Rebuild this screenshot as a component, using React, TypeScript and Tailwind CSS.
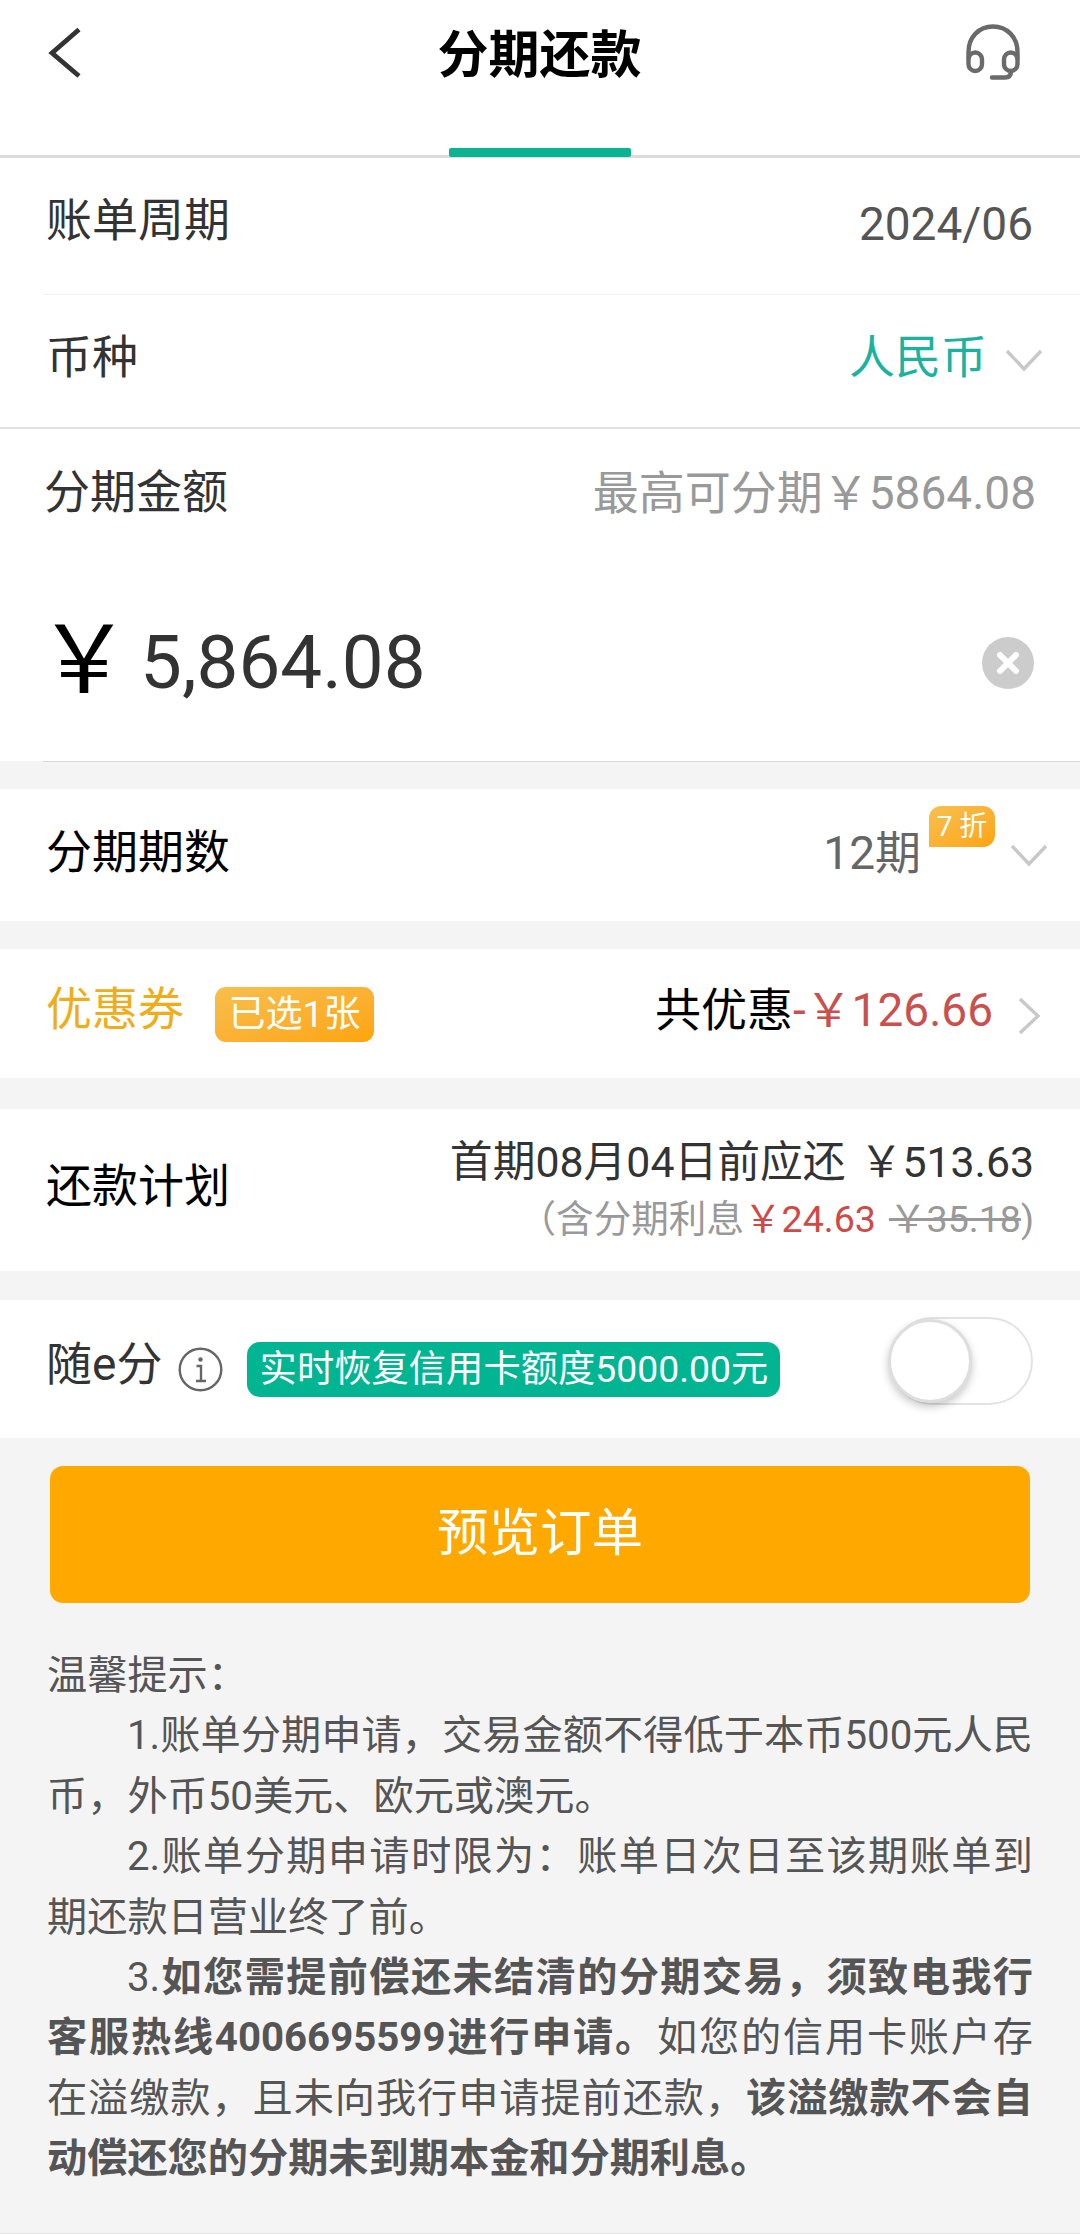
import type { ReactNode } from "react";

function ChevronDown({ className = "" }: { className?: string }) {
  return (
    <svg className={`h-[24px] w-[38px] ${className}`} viewBox="0 0 38 24" fill="none" stroke="#c8c8c8" strokeWidth="3.4">
      <path d="M2 2 L19 20 L36 2" />
    </svg>
  );
}

function Section({ height, children }: { height: string; children: ReactNode }) {
  return (
    <section className={`flex w-full items-start justify-between bg-white pl-[47px] ${height}`}>{children}</section>
  );
}

function Header() {
  return (
    <header className="flex h-[158px] flex-col justify-between border-b-[3px] border-[#dcdcdc] bg-white">
      <div className="flex items-start justify-between pl-[47px] pr-[59px]">
        <svg className="mt-[26px] h-[54px] w-[56px]" viewBox="0 0 56 54" fill="none" stroke="#333" strokeWidth="4.8">
          <path d="M32 3.5 L5 27 L32 50" />
        </svg>
        <h1 className="-mr-[12px] mt-[30px] text-[51px] font-bold leading-[51px] text-black">分期还款</h1>
        <svg
          className="mt-[22px] h-[60px] w-[57px]"
          viewBox="0 0 57 60"
          fill="none"
          stroke="#6a6a6a"
          strokeWidth="4.4"
          strokeLinecap="round"
        >
          <path d="M4.5 36 V30 C4.5 15 15 4.5 29 4.5 S53.500 15 53.500 30 V36" />
          <rect x="4.500" y="30.500" width="13.500" height="18.500" rx="6.750" />
          <rect x="40" y="30.500" width="13.500" height="18.500" rx="6.750" />
          <path d="M47 49 C47 53.500 45 55.500 41 55.500 H28" />
        </svg>
      </div>
      <div className="mx-auto -mb-[2px] h-[9px] w-[182px] shrink-0 rounded-[2px] bg-[#0ab493]" />
    </header>
  );
}

function Toggle() {
  return (
    <div className="mr-[47px] mt-[17px] h-[88px] w-[144px] rounded-full border-2 border-[#e3e3e3] bg-white">
      <div className="-ml-[3px] h-[84px] w-[84px] rounded-full border-[3px] border-[#dedede] bg-white shadow-[0_4px_9px_rgba(0,0,0,0.22)]" />
    </div>
  );
}

function Tips() {
  return (
    <div className="mt-[43px] w-[986px] text-justify text-[40.2px] leading-[60.4px] text-[#555]">
      <p>温馨提示：</p>
      <p className="indent-[80px]">1.账单分期申请，交易金额不得低于本币500元人民币，外币50美元、欧元或澳元。</p>
      <p className="indent-[80px]">2.账单分期申请时限为：账单日次日至该期账单到期还款日营业终了前。</p>
      <p className="indent-[80px]">
        3.<b className="font-bold">如您需提前偿还未结清的分期交易，须致电我行客服热线4006695599进行申请。</b>
        如您的信用卡账户存在溢缴款，且未向我行申请提前还款，
        <b className="font-bold">该溢缴款不会自动偿还您的分期未到期本金和分期利息。</b>
      </p>
    </div>
  );
}

export default function App() {
  return (
    <main
      lang="zh-CN"
      className="flex h-[2234px] w-[1080px] flex-col overflow-hidden border-b border-[#e2e2e2] bg-[#f4f4f4] font-['Roboto','Noto_Sans_CJK_SC',sans-serif] text-[46px] leading-[46px] text-[#333]"
    >
      <Header />

      <Section height="h-[136px]">
        <span className="-ml-px mt-[39px]">账单周期</span>
        <span className="mr-[47px] mt-[43px] text-[#555]">2024/06</span>
      </Section>
      <div className="flex h-[1px] shrink-0 bg-white pl-[43px]">
        <div className="grow bg-[#f0f0f0]" />
      </div>
      <Section height="h-[134px] border-b-2 border-[#e0e0e0]">
        <span className="-ml-px mt-[39px]">币种</span>
        <div className="mr-[37px] flex items-start">
          <span className="mt-[39px] text-[#1bb29f]">人民币</span>
          <ChevronDown className="ml-[18px] mt-[54px]" />
        </div>
      </Section>

      <Section height="h-[151px]">
        <span className="-ml-[3px] mt-[40px]">分期金额</span>
        <span className="mr-[44px] mt-[41px] text-[#999]">最高可分期￥5864.08</span>
      </Section>
      <Section height="h-[181px]">
        <div className="flex items-start">
          <span className="-ml-[10px] mt-[34px] text-[94px] leading-[94px] text-black">￥</span>
          <span className="ml-[9px] mt-[45px] text-[74.5px] leading-[75px]">5,864.08</span>
        </div>
        <svg className="mr-[46px] mt-[57px] size-[52px]" viewBox="0 0 52 52">
          <circle cx="26" cy="26" r="26" fill="#ccc" />
          <path d="M18 18 L34 34 M34 18 L18 34" stroke="#fff" strokeWidth="6" strokeLinecap="round" />
        </svg>
      </Section>
      <div className="mb-[27px] ml-[43px] h-[1px] shrink-0 bg-[#d8d8d8]" />

      <Section height="h-[132px]">
        <span className="-ml-px mt-[40px] text-black">分期期数</span>
        <div className="mr-[32px] flex items-start">
          <span className="mt-[41px] text-[#666]">12期</span>
          <span className="ml-[8px] mt-[17px] flex h-[41px] w-[66px] items-center justify-center rounded-[12px] rounded-bl-none bg-linear-to-br from-[#f6c04d] to-[#ffa408] text-[28px] leading-[28px] text-white">
            7 折
          </span>
          <ChevronDown className="ml-[15px] mt-[55px]" />
        </div>
      </Section>

      <div className="mb-[31px] mt-[28px] flex h-[129px] shrink-0 items-start justify-between bg-white pl-[46px] pr-[38px]">
        <div className="flex items-start">
          <span className="mt-[37px] text-[#eeae1c]">优惠券</span>
          <span className="ml-[31px] mt-[38px] flex h-[55px] w-[159px] items-center justify-center rounded-[11px] bg-linear-to-br from-[#f6bf4b] to-[#ffa405] text-[37px] leading-[37px] text-white">
            已选1张
          </span>
        </div>
        <div className="flex items-start">
          <span className="mt-[38px] text-black">
            共优惠<span className="text-[#c9504e]">-￥126.66</span>
          </span>
          <svg className="ml-[25px] mt-[48px] h-[38px] w-[24px]" viewBox="0 0 24 38" fill="none" stroke="#c8c8c8" strokeWidth="3.4">
            <path d="M2 2 L20 19 L2 36" />
          </svg>
        </div>
      </div>

      <Section height="h-[162px]">
        <span className="-ml-px mt-[54px] text-black">还款计划</span>
        <div className="mr-[46px] mt-[31px] flex flex-col items-end">
          <span className="text-[42.8px] leading-[44px]">
            首期08月04日前应还<span className="ml-[14px]">￥513.63</span>
          </span>
          <span className="mt-[16px] text-[37.600px] leading-[38px] text-[#999]">
            （含分期利息<span className="text-[#cf4a46]">￥24.63</span>
            <s className="ml-[13px]">￥35.18</s>)
          </span>
        </div>
      </Section>

      <div className="mt-[29px] flex h-[138px] shrink-0 items-start bg-white pl-[46px]">
        <span className="mt-[41px]">随e分</span>
        <svg className="ml-[16px] mt-[47px] size-[45px]" viewBox="0 0 45 45" fill="none" stroke="#666" strokeWidth="2.400">
          <circle cx="22.500" cy="22.500" r="20.800" />
          <path d="M18.500 19 H23 V34 M18 34 H28" />
          <circle cx="22.500" cy="12.500" r="2.200" fill="#666" stroke="none" />
        </svg>
        <span className="ml-[24px] mt-[42px] flex h-[55px] w-[533px] items-center justify-center rounded-[13px] bg-[#02b592] text-[37.300px] leading-[37px] text-white">
          实时恢复信用卡额度5000.00元
        </span>
        <div className="ml-auto">
          <Toggle />
        </div>
      </div>

      <div className="flex flex-col px-[47px] pt-[28px]">
        <button className="mx-[3px] h-[137px] w-[980px] rounded-[13px] bg-[#ffa800] pb-[2px] text-[51.500px] leading-[52px] text-white">
          预览订单
        </button>
        <Tips />
      </div>
    </main>
  );
}
